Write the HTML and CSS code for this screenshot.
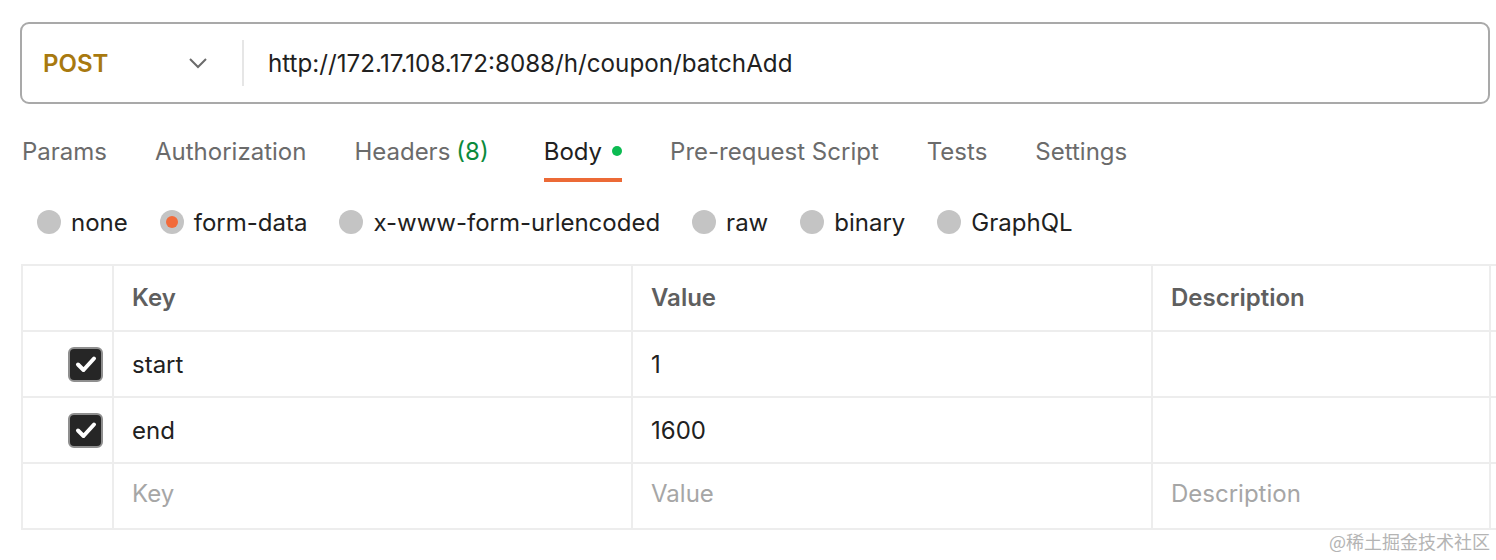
FILE: index.html
```html
<!DOCTYPE html>
<html lang="en">
<head>
  <meta charset="UTF-8">
  <title>Request</title>
  <link rel="stylesheet" href="styles.css">
</head>
<body>
  <div class="url-bar">
    <div class="method">
      <span class="method-name">POST</span>
      <svg class="chevron" width="20" height="12" viewBox="0 0 20 12"><path d="M2 2 L10 10 L18 2" fill="none" stroke="#6b6b6b" stroke-width="2"/></svg>
    </div>
    <div class="divider"></div>
    <div class="url">http://172.17.108.172:8088/h/coupon/batchAdd</div>
  </div>

  <div class="tabs">
    <div class="tab">Params</div>
    <div class="tab">Authorization</div>
    <div class="tab">Headers <span class="count">(8)</span></div>
    <div class="tab active">Body <span class="dot"></span></div>
    <div class="tab">Pre-request Script</div>
    <div class="tab">Tests</div>
    <div class="tab">Settings</div>
  </div>

  <div class="body-types">
    <label class="radio"><span class="circle"></span>none</label>
    <label class="radio checked"><span class="circle"></span>form-data</label>
    <label class="radio"><span class="circle"></span>x-www-form-urlencoded</label>
    <label class="radio"><span class="circle"></span>raw</label>
    <label class="radio"><span class="circle"></span>binary</label>
    <label class="radio"><span class="circle"></span>GraphQL</label>
  </div>

  <table class="kv">
    <colgroup>
      <col class="w-check">
      <col class="w-key">
      <col class="w-val">
      <col class="w-desc">
      <col>
    </colgroup>
    <tr class="head">
      <th class="c-check"></th>
      <th>Key</th>
      <th>Value</th>
      <th>Description</th>
      <th class="c-rest"></th>
    </tr>
    <tr>
      <td class="c-check"><span class="checkbox"><svg width="24" height="20" viewBox="0 0 24 20"><path d="M4 10.5 L9.5 16 L20 4.5" fill="none" stroke="#fff" stroke-width="4" stroke-linecap="round" stroke-linejoin="round"/></svg></span></td>
      <td>start</td>
      <td>1</td>
      <td></td>
      <td class="c-rest"></td>
    </tr>
    <tr>
      <td class="c-check"><span class="checkbox"><svg width="24" height="20" viewBox="0 0 24 20"><path d="M4 10.5 L9.5 16 L20 4.5" fill="none" stroke="#fff" stroke-width="4" stroke-linecap="round" stroke-linejoin="round"/></svg></span></td>
      <td>end</td>
      <td>1600</td>
      <td></td>
      <td class="c-rest"></td>
    </tr>
    <tr class="empty">
      <td class="c-check"></td>
      <td>Key</td>
      <td>Value</td>
      <td>Description</td>
      <td class="c-rest"></td>
    </tr>
  </table>

  <div class="watermark">@稀土掘金技术社区</div>
</body>
</html>
```

FILE: styles.css
```css
body {
  margin: 0;
  padding: 0;
  font-family: Inter, "Noto Sans", sans-serif;
  background: #fff;
  color: #212121;
  width: 1496px;
  height: 560px;
  overflow: hidden;
  position: relative;
}
.url-bar {
  margin: 22px 6px 0 20px;
  height: 78px;
  border: 2px solid #a9a9a9;
  border-radius: 9px;
  display: flex;
  align-items: center;
}
.method {
  width: 220px;
  display: flex;
  align-items: center;
  padding-left: 21px;
  box-sizing: border-box;
}
.method-name {
  font-size: 24px;
  font-weight: 600;
  color: #a8790f;
  flex: 1;
}
.chevron {
  margin-right: 34px;
}
.divider {
  width: 2px;
  height: 46px;
  background: #e6e6e6;
}
.url {
  padding-left: 24px;
  font-size: 24.2px;
  color: #212121;
}
.tabs {
  display: flex;
  gap: 48px;
  margin: 0 0 0 22px;
  height: 78px;
}
.tab {
  font-size: 24px;
  color: #6b6b6b;
  display: flex;
  align-items: center;
  padding-top: 16px;
  box-sizing: border-box;
  position: relative;
  height: 78px;
}
.tab .count {
  color: #0b8a3c;
  margin-left: 6px;
}
.tab.active {
  color: #212121;
  margin-left: 7px;
}
.tab.active::after {
  content: "";
  position: absolute;
  left: 0;
  right: 0;
  bottom: 0;
  height: 4px;
  background: #ec6a36;
}
.dot {
  width: 10px;
  height: 10px;
  border-radius: 50%;
  background: #0cbb52;
  margin-left: 10px;
}
.body-types {
  display: flex;
  align-items: center;
  gap: 32px;
  margin: 0 0 0 37px;
  height: 80px;
}
.radio {
  display: flex;
  align-items: center;
  font-size: 24px;
  color: #212121;
}
.circle {
  width: 24px;
  height: 24px;
  border-radius: 50%;
  background: #c4c4c4;
  margin-right: 10px;
  display: flex;
  align-items: center;
  justify-content: center;
}
.radio.checked .circle::after {
  content: "";
  width: 12px;
  height: 12px;
  border-radius: 50%;
  background: #f26b3a;
}
.kv {
  margin: 2px 0 0 21px;
  border-collapse: collapse;
  table-layout: fixed;
  width: 1500px;
}
.w-check { width: 91px; }
.w-key { width: 519px; }
.w-val { width: 520px; }
.w-desc { width: 338px; }
.kv th, .kv td {
  border: 2px solid #ededed;
  height: 64px;
  padding: 0 0 0 18px;
  text-align: left;
  font-size: 24px;
  font-weight: 400;
  color: #212121;
}
.kv th {
  font-weight: 600;
  color: #5f5f5f;
  height: 62px;
  padding-bottom: 2px;
}
.kv .c-check {
  padding-left: 0;
  padding-right: 9px;
  text-align: right;
}
.kv td.c-rest {
  border-left: none;
  border-right: none;
  padding: 0;
}
.kv th.c-rest {
  border-right: none;
  padding: 0;
}
.kv .empty td {
  color: #a6a6a6;
  height: 58px;
  padding-bottom: 6px;
}
.checkbox {
  display: inline-flex;
  align-items: center;
  justify-content: center;
  width: 31px;
  height: 31px;
  background: #262626;
  border: 2px solid #8f8f8f;
  border-radius: 6px;
  vertical-align: middle;
}
.watermark {
  position: absolute;
  right: 6px;
  bottom: 6px;
  font-family: "Noto Sans CJK SC", sans-serif;
  font-size: 18px;
  color: #b4b4b4;
}
```
